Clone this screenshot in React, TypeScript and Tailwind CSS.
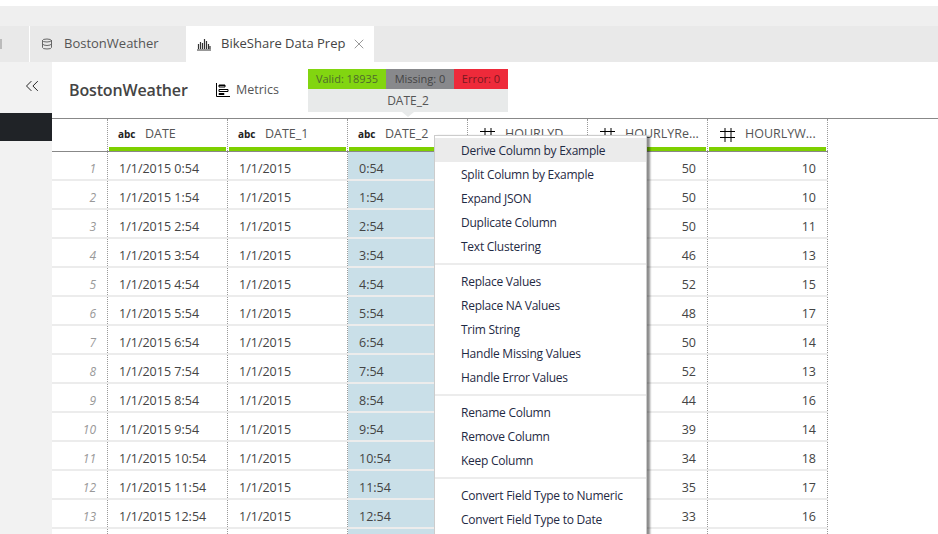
import { ChevronsLeft, Database, X } from "lucide-react";

const rows = [
  ["1/1/2015 0:54", "0:54", "50", "10"],
  ["1/1/2015 1:54", "1:54", "50", "10"],
  ["1/1/2015 2:54", "2:54", "50", "11"],
  ["1/1/2015 3:54", "3:54", "46", "13"],
  ["1/1/2015 4:54", "4:54", "52", "15"],
  ["1/1/2015 5:54", "5:54", "48", "17"],
  ["1/1/2015 6:54", "6:54", "50", "14"],
  ["1/1/2015 7:54", "7:54", "52", "13"],
  ["1/1/2015 8:54", "8:54", "44", "16"],
  ["1/1/2015 9:54", "9:54", "39", "14"],
  ["1/1/2015 10:54", "10:54", "34", "18"],
  ["1/1/2015 11:54", "11:54", "35", "17"],
  ["1/1/2015 12:54", "12:54", "33", "16"],
  ["", "", "", ""],
];

const columns = [
  { name: "DATE", type: "abc" },
  { name: "DATE_1", type: "abc" },
  { name: "DATE_2", type: "abc" },
  { name: "HOURLYD...", type: "num" },
  { name: "HOURLYRe...", type: "num" },
  { name: "HOURLYW...", type: "num" },
];

const menuGroups = [
  ["Derive Column by Example", "Split Column by Example", "Expand JSON", "Duplicate Column", "Text Clustering"],
  ["Replace Values", "Replace NA Values", "Trim String", "Handle Missing Values", "Handle Error Values"],
  ["Rename Column", "Remove Column", "Keep Column"],
  ["Convert Field Type to Numeric", "Convert Field Type to Date"],
];

function HashIcon() {
  return (
    <svg width="15" height="15" viewBox="0 0 15 15" className="shrink-0 text-black">
      <path d="M5 1v14M11 1v14M0 4.5h15M0 10.5h15" stroke="currentColor" strokeWidth="1" fill="none" />
    </svg>
  );
}

function BarsIcon() {
  return (
    <svg width="14" height="13" viewBox="0 0 14 13" className="shrink-0 text-[#333]">
      <path d="M1.5 6v5M3.5 4v7M5.5 5v6M7.5 1v10M9.5 3v8M11.5 6v5M13 8v3M0 12h14" stroke="currentColor" strokeWidth="1.2" fill="none" />
    </svg>
  );
}

function MetricsIcon() {
  return (
    <svg width="14" height="14" viewBox="0 0 14 14" className="shrink-0 text-black">
      <path d="M.5 0v13.5H14M3 2.5h6M3 2h6v2H3zM3 6.5h9v2H3zM3 10.5h5v1H3z" stroke="currentColor" strokeWidth="1" fill="none" />
    </svg>
  );
}

export default function App() {
  return (
    <div className="relative h-[534px] w-[938px] overflow-hidden bg-white font-['Open_Sans',sans-serif] text-[12.5px] text-[#444]">
      {/* top bands */}
      <div className="mt-[6px] h-[20px] bg-[#efefef]" />
      <div className="flex h-[36px] bg-[#e9e9e9]">
        <div className="flex w-[30px] items-center border-r border-white">
          <div className="h-[10px] w-[2px] bg-[#bbb]" />
        </div>
        <div className="flex w-[156px] items-center pl-[11px] text-[13px] text-[#555]">
          <Database size={12} className="mr-[11px] text-[#666]" />
          BostonWeather
        </div>
        <div className="flex w-[188px] items-center bg-white pl-[11px] text-[13px] text-[#444]">
          <BarsIcon />
          <span className="ml-[10px]">BikeShare Data Prep</span>
          <X size={16} strokeWidth={1.5} className="ml-[6px] text-[#999]" />
        </div>
      </div>

      <div className="flex">
        {/* sidebar */}
        <div className="h-[472px] w-[52px] shrink-0 bg-[#f2f2f2]">
          <div className="flex h-[51px] items-center justify-end pr-[9px] pb-[4px]">
            <ChevronsLeft size={22} strokeWidth={1} className="text-[#111]" />
          </div>
          <div className="h-[28px] bg-[#202327]" />
        </div>

        <div className="flex-1">
          {/* header */}
          <div className="flex h-[57px] border-b border-[#888]">
            <div className="w-[164px] pt-[16px] pl-[17px] text-[16px] font-semibold tracking-[-0.15px] leading-[24px] text-[#444]">
              BostonWeather
            </div>
            <div className="flex h-[56px] w-[92px] items-center gap-[6px] text-[12.5px] text-[#555]">
              <MetricsIcon />
              Metrics
            </div>
            <div className="relative mt-[7px] w-[200px]">
              <div className="flex h-[20px] text-[11px] leading-[20px]">
                <div className="w-[78px] bg-[#82d510] text-center text-[#4f6b2c]">Valid: 18935</div>
                <div className="w-[68px] bg-[#88898c] text-center text-[#444]">Missing: 0</div>
                <div className="w-[54px] bg-[#ee2a3a] text-center text-[#7a1820]">Error: 0</div>
              </div>
              <div className="h-[23px] bg-[#e8eaea] text-center text-[12px] leading-[23px] text-[#555]">DATE_2</div>
              <div className="mx-auto h-0 w-0 border-x-[6px] border-t-[5px] border-x-transparent border-t-[#e8eaea]" />
            </div>
          </div>

          {/* column headers */}
          <div className="flex h-[33px] w-[776px] border-b border-[#888]">
            <div className="h-full w-[56px] border-r border-dotted border-[#999]" />
            {columns.map((col) => (
              <div key={col.name} className="flex h-full w-[120px] flex-col border-r border-dotted border-[#999]">
                <div className="flex h-[28px] items-center pt-[2px]">
                  {col.type === "abc" ? (
                    <span className="w-[37px] shrink-0 pl-[10px] text-[10px] font-bold text-[#222]">abc</span>
                  ) : (
                    <span className="w-[37px] shrink-0 pl-[12px]">
                      <HashIcon />
                    </span>
                  )}
                  <span className="whitespace-nowrap text-[12.5px] text-[#555]">{col.name}</span>
                </div>
                <div className="mx-[1px] h-[4px] bg-[#7ed000]" />
              </div>
            ))}
          </div>

          {/* rows */}
          {rows.map((row, i) => (
            <div key={i} className="flex h-[29px] w-[776px] border-b-2 border-[#ececec] leading-[33px]">
              <div className="w-[56px] border-r border-dotted border-[#999] pr-[11px] text-right text-[12px] text-[#999] italic">
                {row[0] ? i + 1 : ""}
              </div>
              <div className="w-[120px] border-r border-dotted border-[#999] pl-[11px]">{row[0]}</div>
              <div className="w-[120px] border-r border-dotted border-[#999] pl-[11px]">{row[0] ? "1/1/2015" : ""}</div>
              <div className="w-[120px] border-r border-dotted border-[#999] bg-[#c9dfe8] pl-[11px]">{row[1]}</div>
              <div className="w-[120px] border-r border-dotted border-[#999]" />
              <div className="w-[120px] border-r border-dotted border-[#999] pr-[11px] text-right">{row[2]}</div>
              <div className="w-[120px] border-r border-dotted border-[#999] pr-[11px] text-right">{row[3]}</div>
            </div>
          ))}
        </div>
      </div>

      {/* column context menu */}
      <div className="absolute top-[135px] left-[434px] h-[420px] w-[213px] border border-[#ccc] bg-white pt-[2px] shadow-[3px_1px_2px_rgba(0,0,0,0.45)]">
        {menuGroups.map((group, g) => (
          <div key={g} className={g > 0 ? "mt-[5px] border-t-2 border-[#ececec] pt-[4px]" : ""}>
            {group.map((item) => (
              <div
                key={item}
                className={`h-[24px] pl-[26px] text-[12px] tracking-[-0.25px] leading-[26px] text-[#1f2a44] ${
                  item === "Derive Column by Example" ? "bg-[#ebebeb]" : ""
                }`}
              >
                {item}
              </div>
            ))}
          </div>
        ))}
      </div>
    </div>
  );
}
